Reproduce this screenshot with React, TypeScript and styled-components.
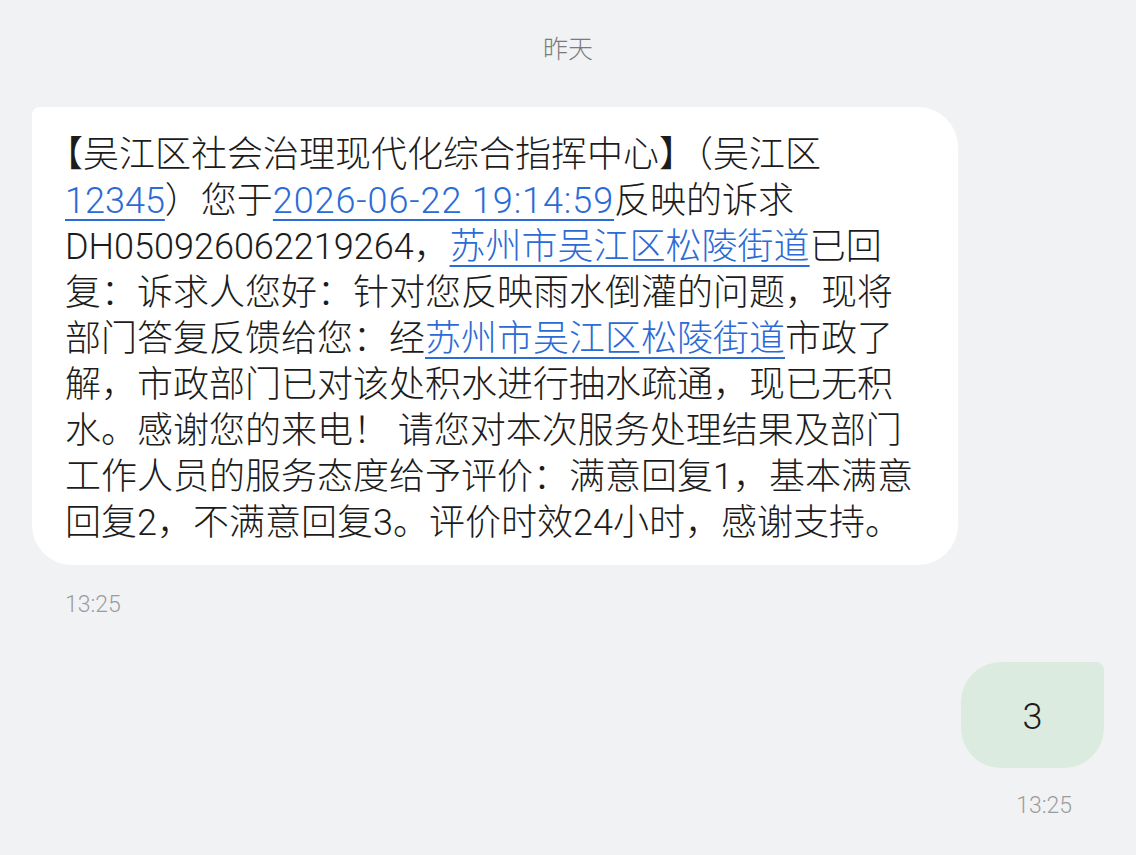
import React from "react";
import styled, { createGlobalStyle } from "styled-components";

const GlobalStyle = createGlobalStyle`
  html, body {
    margin: 0;
    padding: 0;
    background: #f1f2f4;
  }
  body {
    font-family: Roboto, "Noto Sans CJK SC", sans-serif;
    -webkit-font-smoothing: antialiased;
  }
`;

const Page = styled.div`
  width: 1136px;
  height: 855px;
  box-sizing: border-box;
  padding: 30px 32px 0;
  display: flex;
  flex-direction: column;
  background: #f1f2f4;
  overflow: hidden;
`;

const DateLabel = styled.div`
  align-self: center;
  font-size: 25px;
  line-height: 34px;
  color: #7b7b7d;
  font-weight: 300;
  font-family: "Noto Sans CJK SC", sans-serif;
`;

const Row = styled.div<{ $out?: boolean; $top: number }>`
  display: flex;
  justify-content: ${(p) => (p.$out ? "flex-end" : "flex-start")};
  margin-top: ${(p) => p.$top}px;
`;

const InBubble = styled.div`
  width: 926px;
  box-sizing: border-box;
  background: #ffffff;
  border-radius: 8px 40px 40px 40px;
  padding: 25px 20px 19px 33px;
`;

const Message = styled.p`
  margin: 0;
  font-size: 36px;
  line-height: 46px;
  font-weight: 300;
  color: #1c1c1c;
  white-space: nowrap;
  text-spacing-trim: trim-start;
`;

const Link = styled.span<{ $spaced?: boolean }>`
  color: #2b6bd6;
  text-decoration: underline;
  text-decoration-thickness: 2px;
  text-underline-offset: 6px;
  letter-spacing: ${(p) => (p.$spaced ? "0.9px" : "0")};
`;

const Time = styled.div<{ $out?: boolean }>`
  font-size: 23px;
  line-height: 28px;
  color: #9c9c9e;
  font-weight: 300;
  padding: ${(p) => (p.$out ? "0 32px 0 0" : "0 0 0 33px")};
  text-align: ${(p) => (p.$out ? "right" : "left")};
`;

const OutBubble = styled.div`
  width: 143px;
  height: 106px;
  box-sizing: border-box;
  padding-top: 4px;
  background: #dcebdf;
  border-radius: 40px 8px 40px 40px;
  display: flex;
  align-items: center;
  justify-content: center;
  font-size: 36px;
  font-weight: 300;
  color: #1c1c1c;
`;

export default function App() {
  return (
    <>
      <GlobalStyle />
      <Page>
        <DateLabel>昨天</DateLabel>
        <Row $top={43}>
          <InBubble>
            <Message>
              【吴江区社会治理现代化综合指挥中心】（吴江区
              <br />
              <Link>12345</Link>）您于<Link $spaced>2026-06-22 19:14:59</Link>反映的诉求
              <br />
              DH050926062219264，<Link>苏州市吴江区松陵街道</Link>已回
              <br />
              复：诉求人您好：针对您反映雨水倒灌的问题，现将
              <br />
              部门答复反馈给您：经<Link>苏州市吴江区松陵街道</Link>市政了
              <br />
              解，市政部门已对该处积水进行抽水疏通，现已无积
              <br />
              水。感谢您的来电！ 请您对本次服务处理结果及部门
              <br />
              工作人员的服务态度给予评价：满意回复1，基本满意
              <br />
              回复2，不满意回复3。评价时效24小时，感谢支持。
            </Message>
          </InBubble>
        </Row>
        <Row $top={26}>
          <Time>13:25</Time>
        </Row>
        <Row $out $top={43}>
          <OutBubble>3</OutBubble>
        </Row>
        <Row $out $top={24}>
          <Time $out>13:25</Time>
        </Row>
      </Page>
    </>
  );
}
